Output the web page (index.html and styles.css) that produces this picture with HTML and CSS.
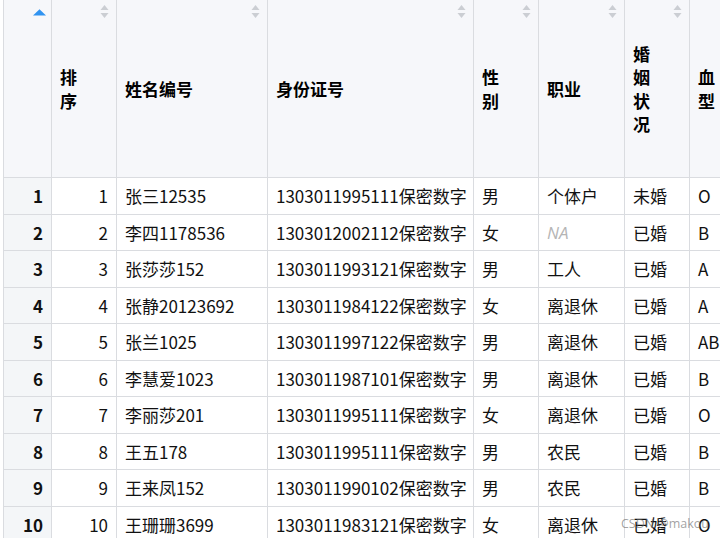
FILE: index.html
```html
<!DOCTYPE html>
<html lang="zh">
<head>
<meta charset="utf-8">
<title>数据表</title>
<link rel="stylesheet" href="styles.css">
</head>
<body>
<div class="viewport">
  <div class="table">
    <div class="th rownum"><svg class="sort" viewBox="0 0 13 16"><polygon class="active" points="0,11.5 6.5,5.3 13,11.5"/></svg></div>
    <div class="th"><span class="lbl">排序</span><svg class="sort" viewBox="0 0 13 16"><polygon points="2.5,6 6.5,1 10.5,6"/><polygon points="2.5,9 10.5,9 6.5,14"/></svg></div>
    <div class="th"><span class="lbl">姓名编号</span><svg class="sort" viewBox="0 0 13 16"><polygon points="2.5,6 6.5,1 10.5,6"/><polygon points="2.5,9 10.5,9 6.5,14"/></svg></div>
    <div class="th"><span class="lbl">身份证号</span><svg class="sort" viewBox="0 0 13 16"><polygon points="2.5,6 6.5,1 10.5,6"/><polygon points="2.5,9 10.5,9 6.5,14"/></svg></div>
    <div class="th"><span class="lbl">性别</span><svg class="sort" viewBox="0 0 13 16"><polygon points="2.5,6 6.5,1 10.5,6"/><polygon points="2.5,9 10.5,9 6.5,14"/></svg></div>
    <div class="th"><span class="lbl">职业</span><svg class="sort" viewBox="0 0 13 16"><polygon points="2.5,6 6.5,1 10.5,6"/><polygon points="2.5,9 10.5,9 6.5,14"/></svg></div>
    <div class="th"><span class="lbl">婚姻状况</span><svg class="sort" viewBox="0 0 13 16"><polygon points="2.5,6 6.5,1 10.5,6"/><polygon points="2.5,9 10.5,9 6.5,14"/></svg></div>
    <div class="th"><span class="lbl">血型</span><svg class="sort" viewBox="0 0 13 16"><polygon points="2.5,6 6.5,1 10.5,6"/><polygon points="2.5,9 10.5,9 6.5,14"/></svg></div>

    <div class="td rownum">1</div><div class="td num">1</div><div class="td">张三12535</div><div class="td">1303011995111保密数字</div><div class="td">男</div><div class="td">个体户</div><div class="td">未婚</div><div class="td">O</div>
    <div class="td rownum">2</div><div class="td num">2</div><div class="td">李四1178536</div><div class="td">1303012002112保密数字</div><div class="td">女</div><div class="td na">NA</div><div class="td">已婚</div><div class="td">B</div>
    <div class="td rownum">3</div><div class="td num">3</div><div class="td">张莎莎152</div><div class="td">1303011993121保密数字</div><div class="td">男</div><div class="td">工人</div><div class="td">已婚</div><div class="td">A</div>
    <div class="td rownum">4</div><div class="td num">4</div><div class="td">张静20123692</div><div class="td">1303011984122保密数字</div><div class="td">女</div><div class="td">离退休</div><div class="td">已婚</div><div class="td">A</div>
    <div class="td rownum">5</div><div class="td num">5</div><div class="td">张兰1025</div><div class="td">1303011997122保密数字</div><div class="td">男</div><div class="td">离退休</div><div class="td">已婚</div><div class="td">AB</div>
    <div class="td rownum">6</div><div class="td num">6</div><div class="td">李慧爱1023</div><div class="td">1303011987101保密数字</div><div class="td">男</div><div class="td">离退休</div><div class="td">已婚</div><div class="td">B</div>
    <div class="td rownum">7</div><div class="td num">7</div><div class="td">李丽莎201</div><div class="td">1303011995111保密数字</div><div class="td">女</div><div class="td">离退休</div><div class="td">已婚</div><div class="td">O</div>
    <div class="td rownum">8</div><div class="td num">8</div><div class="td">王五178</div><div class="td">1303011995111保密数字</div><div class="td">男</div><div class="td">农民</div><div class="td">已婚</div><div class="td">B</div>
    <div class="td rownum">9</div><div class="td num">9</div><div class="td">王来凤152</div><div class="td">1303011990102保密数字</div><div class="td">男</div><div class="td">农民</div><div class="td">已婚</div><div class="td">B</div>
    <div class="td rownum">10</div><div class="td num">10</div><div class="td">王珊珊3699</div><div class="td">1303011983121保密数字</div><div class="td">女</div><div class="td">离退休</div><div class="td">已婚</div><div class="td">O</div>
  </div>
  <div class="watermark">CSDN @makou</div>
</div>
</body>
</html>
```

FILE: styles.css
```css
html, body {
  margin: 0;
  padding: 0;
  background: #ffffff;
}
body {
  font-family: "Noto Sans CJK SC", "Open Sans", sans-serif;
  font-size: 17px;
  color: #111;
}
.viewport {
  position: relative;
  width: 720px;
  height: 538px;
  overflow: hidden;
}
.table {
  display: grid;
  grid-template-columns: 47px 64px 150px 205px 64px 85px 64px 64px;
  grid-template-rows: 177px;
  grid-auto-rows: 35.5px;
  gap: 1px;
  width: max-content;
  margin-left: 3px;
  border-left: 1px solid #dadce0;
  background: #dadce0;
}
.th {
  position: relative;
  display: flex;
  align-items: center;
  padding: 0 28px 0 8px;
  background: #f6f7fa;
  font-weight: 700;
  line-height: 23.5px;
  color: #000;
}
.sort {
  position: absolute;
  top: 4px;
  right: 5px;
  width: 13px;
  height: 16px;
}
.sort polygon {
  fill: #cbced3;
}
.sort polygon.active {
  fill: #3093f0;
}
.td {
  display: flex;
  align-items: center;
  padding: 0 8px;
  background: #ffffff;
  white-space: nowrap;
  line-height: 1;
}
.td.rownum {
  justify-content: flex-end;
  font-weight: 700;
  background: #f4f6f8;
}
.td.num {
  justify-content: flex-end;
}
.td.na {
  font-style: italic;
  color: #b5b5b5;
  font-family: "Open Sans", sans-serif;
}
.watermark {
  position: absolute;
  left: 621px;
  top: 515px;
  font-family: "Open Sans", sans-serif;
  font-size: 12.5px;
  color: rgba(110, 110, 110, 0.65);
  pointer-events: none;
}
```
